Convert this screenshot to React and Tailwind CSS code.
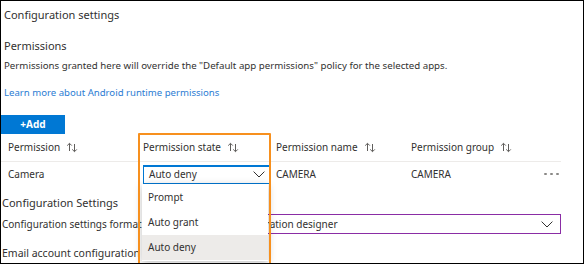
import React from "react";

const font = { fontFamily: '"Noto Sans", "Open Sans", sans-serif' };

function SortIcon() {
  return (
    <svg width="12" height="11" viewBox="0 0 12 11" className="ml-[6px] shrink-0" fill="none" stroke="#605e5c" strokeWidth="1">
      <path d="M3.5 9V1.5M1.2 3.6L3.5 1.3L5.8 3.6" />
      <path d="M8.5 2V9.5M6.2 7.4L8.5 9.7L10.8 7.4" />
    </svg>
  );
}

function Chevron({ className }) {
  return (
    <svg width="12" height="7" viewBox="0 0 12 7" className={className} fill="none" stroke="#323130" strokeWidth="1">
      <path d="M0.6 0.6L6 6L11.4 0.6" />
    </svg>
  );
}

export default function App() {
  return (
    <div style={font} className="relative w-[584px] h-[264px] overflow-hidden bg-white border border-black text-[#323130]">
      <div className="h-[29px] flex items-center pl-[3px] text-[11px]">Configuration settings</div>
      <div className="h-[24px] mt-[4px] flex items-center pl-[3px] text-[11px]">Permissions</div>
      <div className="h-[16px] flex items-center pl-[3px] text-[9.7px] whitespace-nowrap">
        Permissions granted here will override the "Default app permissions" policy for the selected apps.
      </div>
      <div className="h-[18px] mt-[10px] flex items-center pl-[3px] text-[9.6px] text-[#2b7cd3] whitespace-nowrap">
        Learn more about Android runtime permissions
      </div>
      <div className="mt-[13px] h-[19px] w-[64px] bg-[#0078d4] text-white text-[10px] font-bold flex items-center justify-center">
        +Add
      </div>
      <div className="w-[560px]">
        <div className="grid grid-cols-[135px_133px_134px_1fr_40px] h-[28px] items-center text-[10px] text-[#323130] border-b border-[#edebe9]">
          <div className="pl-[7px] flex items-center">Permission<SortIcon /></div>
          <div className="pl-[7px] flex items-center">Permission state<SortIcon /></div>
          <div className="pl-[7px] flex items-center">Permission name<SortIcon /></div>
          <div className="pl-[8px] flex items-center">Permission group<SortIcon /></div>
          <div />
        </div>
        <div className="grid grid-cols-[135px_133px_134px_1fr_40px] h-[24px] items-center text-[10px]">
          <div className="pl-[7px]">Camera</div>
          <div className="pl-[7px]">
            <div className="h-[19px] w-[128px] border border-[#0078d4] border-t-2 flex items-center justify-between pl-[5px] pr-[5px]">
              <span>Auto deny</span>
              <Chevron />
            </div>
          </div>
          <div className="pl-[7px]">CAMERA</div>
          <div className="pl-[8px]">CAMERA</div>
          <div className="flex items-center gap-[3.5px] pl-[23px]">
            <span className="w-[2.5px] h-[2.5px] rounded-full bg-[#8a8886]" />
            <span className="w-[2.5px] h-[2.5px] rounded-full bg-[#8a8886]" />
            <span className="w-[2.5px] h-[2.5px] rounded-full bg-[#8a8886]" />
          </div>
        </div>
      </div>
      <div className="h-[20px] mt-[7px] flex items-center pl-[1px] text-[11px]">Configuration Settings</div>
      <div className="h-[20px] mt-[1px] flex items-center pl-[1px] text-[10px] w-[560px]">
        <span className="w-[199px] shrink-0 whitespace-nowrap">Configuration settings format</span>
        <div className="flex-1 h-[20px] border border-[#8a2da5] flex items-center justify-between pl-[8px] pr-[7px]">
          <span>Use configuration designer</span>
          <Chevron />
        </div>
      </div>
      <div className="h-[20px] mt-[10px] flex items-center pl-[1px] text-[10.5px] whitespace-nowrap">Email account configuration</div>

      <div className="absolute left-[141px] top-[183px] w-[126px] bg-white shadow-[0_2px_8px_rgba(0,0,0,0.25)] text-[10px] py-[1px]">
        <div className="h-[25px] flex items-center pl-[6px]">Prompt</div>
        <div className="h-[25px] flex items-center pl-[6px]">Auto grant</div>
        <div className="h-[25px] flex items-center pl-[6px] bg-[#edebe9]">Auto deny</div>
      </div>
      <div className="absolute left-[137px] top-[132px] w-[133px] h-[132px] border-2 border-[#f7901e] rounded-[1px]" />
    </div>
  );
}
